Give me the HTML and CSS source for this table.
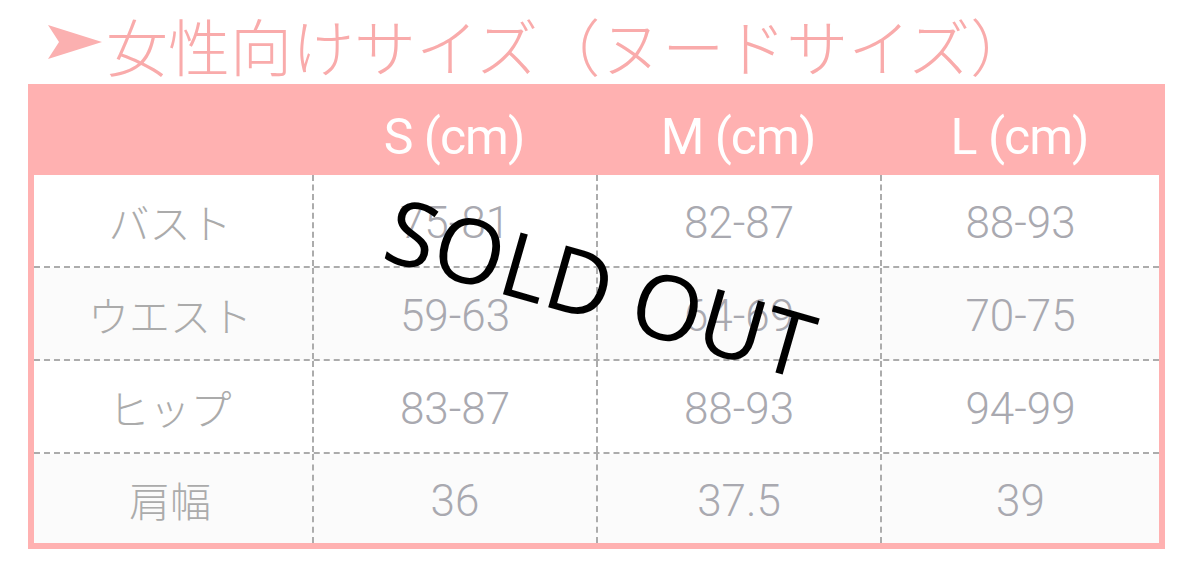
FILE: index.html
```html
<!DOCTYPE html>
<html lang="ja">
<head>
<meta charset="utf-8">
<title>女性向けサイズ</title>
<link rel="stylesheet" href="styles.css">
</head>
<body>
<div class="page">
  <h1 class="title">
    <svg class="arrow" viewBox="0 0 54 34" aria-hidden="true">
      <polygon points="0,0 54,17 0,34 11,17" fill="#fbb0b0"/>
    </svg>
    <span class="title-text">女性向けサイズ（ヌードサイズ）</span>
  </h1>
  <div class="chart">
    <div class="head">
      <div class="hcell"></div>
      <div class="hcell">S (cm)</div>
      <div class="hcell">M (cm)</div>
      <div class="hcell">L (cm)</div>
    </div>
    <div class="rows">
      <div class="row">
        <div class="cell label">バスト</div>
        <div class="cell">75-81</div>
        <div class="cell">82-87</div>
        <div class="cell">88-93</div>
      </div>
      <div class="row alt">
        <div class="cell label">ウエスト</div>
        <div class="cell">59-63</div>
        <div class="cell">64-69</div>
        <div class="cell">70-75</div>
      </div>
      <div class="row">
        <div class="cell label">ヒップ</div>
        <div class="cell">83-87</div>
        <div class="cell">88-93</div>
        <div class="cell">94-99</div>
      </div>
      <div class="row alt last">
        <div class="cell label">肩幅</div>
        <div class="cell">36</div>
        <div class="cell">37.5</div>
        <div class="cell">39</div>
      </div>
    </div>
    <div class="sold">SOLD OUT</div>
  </div>
</div>
</body>
</html>
```
FILE: styles.css
```css
html, body {
  margin: 0;
  padding: 0;
  background: #ffffff;
}

.page {
  padding-left: 28px;
  width: 1137px;
}

.title {
  margin: 0;
  height: 84px;
  display: flex;
  align-items: center;
  font-weight: 300;
  font-family: "Noto Sans CJK JP", "Noto Sans", sans-serif;
  font-size: 62px;
  line-height: 1;
  color: #f9abab;
}

.arrow {
  width: 54px;
  height: 34px;
  margin-left: 20px;
  margin-right: 4px;
  flex: none;
}

.title-text {
  display: block;
  padding-top: 6px;
  white-space: nowrap;
}

.chart {
  position: relative;
  width: 1137px;
  box-sizing: border-box;
  border: 6px solid #ffb1b1;
  border-top: none;
  background: #ffffff;
}

.head {
  display: grid;
  grid-template-columns: 278px 284px 284px 1fr;
  height: 91px;
  background: #ffb1b1;
  margin: 0 -6px;
  padding: 0 6px;
}

.hcell {
  display: flex;
  align-items: center;
  justify-content: center;
  padding-top: 14px;
  color: #ffffff;
  font-family: Roboto, "Liberation Sans", sans-serif;
  font-size: 50px;
  letter-spacing: -1px;
}

.rows {
  display: flex;
  flex-direction: column;
  height: 368px;
}

.row {
  display: grid;
  grid-template-columns: 278px 284px 284px 1fr;
  height: 93px;
  box-sizing: border-box;
  border-bottom: 2px dashed #acacac;
  flex: none;
}

.row.last {
  flex: 1;
  height: auto;
  border-bottom: none;
}

.row.alt {
  background: #fbfbfb;
}

.cell {
  display: flex;
  align-items: center;
  justify-content: center;
  border-left: 2px dashed #acacac;
  color: #a9a9b0;
  font-family: Roboto, "Liberation Sans", sans-serif;
  font-weight: 300;
  font-size: 44px;
  padding-top: 4px;
}

.cell.label {
  border-left: none;
  font-family: "Noto Sans CJK JP", "Noto Sans", sans-serif;
  font-size: 41px;
  font-weight: 300;
  color: #ababab;
  padding-top: 0;
  padding-right: 6px;
}

.sold {
  position: absolute;
  left: 567px;
  top: 202px;
  transform: translate(-50%, -50%) rotate(16deg);
  font-family: "Open Sans", "Noto Sans", sans-serif;
  font-size: 90px;
  line-height: 1;
  color: #000000;
  white-space: nowrap;
}
```
